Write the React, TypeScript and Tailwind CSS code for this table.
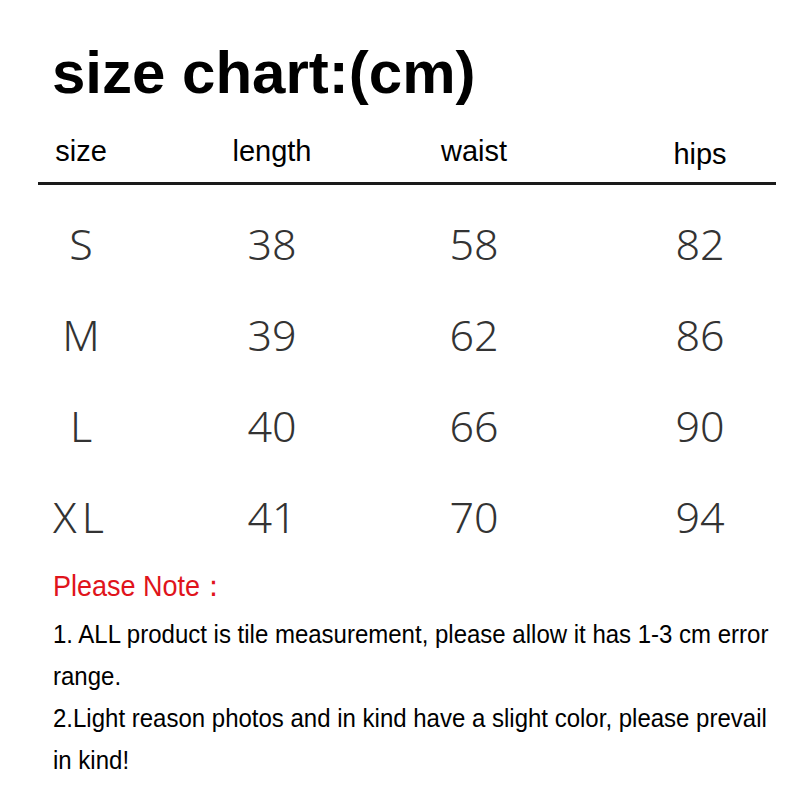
const cols = [
  'w-[120px] ml-[21px]',
  'w-[120px] ml-[71px]',
  'w-[120px] ml-[82px]',
  'w-[120px] ml-[106px]',
];

const header = ['size', 'length', 'waist', 'hips'];

const rows = [
  ['S', '38', '58', '82'],
  ['M', '39', '62', '86'],
  ['L', '40', '66', '90'],
  ['XL', '41', '70', '94'],
];

const notes = [
  '1. ALL product is tile measurement, please allow it has 1-3 cm error',
  'range.',
  '2.Light reason photos and in kind have a slight color, please prevail',
  'in kind!',
];

export default function App() {
  return (
    <div className="w-[800px] h-[800px] bg-white overflow-hidden">
      {/* Title */}
      <h1 className="pt-[43px] pl-[52px] text-[60px] leading-[60px] font-bold text-black font-['Liberation_Sans',Arial,sans-serif]">
        size chart:(cm)
      </h1>

      {/* Column headers */}
      <div className="flex mt-[24px] h-[50px] items-center text-[29px] text-black font-['Liberation_Sans',Arial,sans-serif]">
        {header.map((h, i) => (
          <div key={h} className={`${cols[i]} text-center ${i === 3 ? 'pt-[5px]' : ''}`}>
            {h}
          </div>
        ))}
      </div>

      <div className="ml-[38px] w-[738px] mt-[5px] h-[3px] bg-[#1a1a1a]" />

      {/* Data rows */}
      <div className="mt-[14px] font-['Noto_Sans','DejaVu_Sans',sans-serif] font-light text-[43px] text-[#333]">
        {rows.map((r) => (
          <div key={r[0]} className="flex h-[91px] items-center">
            {r.map((c, i) => (
              <div key={i} className={`${cols[i]} text-center ${i === 0 && c === 'XL' ? 'tracking-[0.12em]' : ''}`}>
                {c}
              </div>
            ))}
          </div>
        ))}
      </div>

      {/* Notes */}
      <div className="pl-[53px] font-['Liberation_Sans',Arial,sans-serif] whitespace-nowrap">
        <div className="text-[#e0141b] text-[30px] leading-[42px] mt-[2px] origin-left scale-x-[0.9]">
          Please Note：
        </div>
        <div className="text-black text-[25px] leading-[42px] mt-[6px]">
          {notes.map((n) => (
            <p key={n} className="origin-left scale-x-[0.96]">{n}</p>
          ))}
        </div>
      </div>
    </div>
  );
}
